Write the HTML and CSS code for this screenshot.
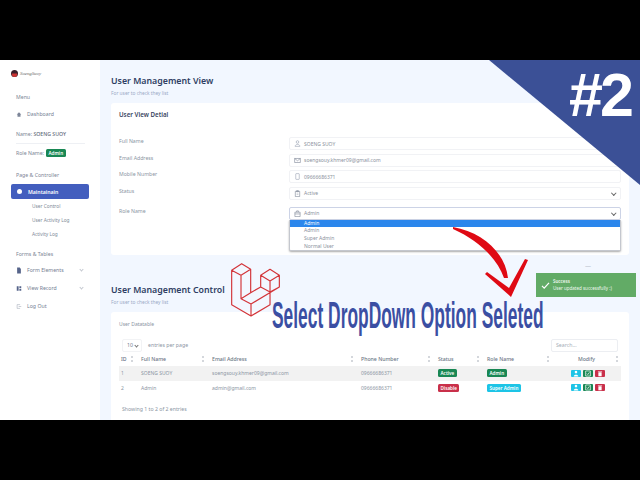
FILE: index.html
```html
<!DOCTYPE html>
<html>
<head>
<meta charset="utf-8" />
<title>User Management</title>
<link rel="stylesheet" href="styles.css">
</head>
<body>
<div class="frame">
  <div class="app">
    <div class="sidebar">
      <div class="brand">
        <svg class="brand-mark" viewBox="0 0 8 8"><circle cx="4" cy="4" r="4" fill="#3a1f2b"/><path d="M1 4h6v1.500a3 2.500 0 0 1-6 0z" fill="#c33"/></svg>
        <span class="brand-name">SoengSuoy</span>
      </div>
      <div class="side-title first">Menu</div>
      <div class="side-item">
        <svg class="side-icon" viewBox="0 0 8 8"><path d="M4 1 7 4H6v3H2V4H1z" fill="#7c8598"/></svg>Dashboard
      </div>
      <div class="side-title name">Name: <b>SOENG SUOY</b></div>
      <div class="side-line"></div>
      <div class="side-title role">Role Name: <span class="badge green">Admin</span></div>
      <div class="side-title page">Page &amp; Controller</div>
      <div class="side-pill"><span class="pill-dot"></span>Maintainain</div>
      <div class="side-sub">User Control</div>
      <div class="side-sub">User Activity Log</div>
      <div class="side-sub">Activity Log</div>
      <div class="side-title forms">Forms &amp; Tables</div>
      <div class="side-item">
        <svg class="side-icon" viewBox="0 0 8 8"><path d="M1.500 0H5L6.500 2V8H1.500z" fill="#56648a"/></svg>Form Elements<span class="side-more"></span>
      </div>
      <div class="side-item">
        <svg class="side-icon" viewBox="0 0 8 8"><path d="M1 1h2.500v6H1zM4.500 1H7v2.500H4.500zM4.500 4.500H7V7H4.500z" fill="#56648a"/></svg>View Record<span class="side-more"></span>
      </div>
      <div class="side-item">
        <svg class="side-icon" viewBox="0 0 8 8"><path d="M5 2V1.500H1.500v5H5V6M3.500 4H7" fill="none" stroke="#8a93a6" stroke-width=".6"/></svg>Log Out
      </div>
    </div>

    <div class="main">
      <h1 class="page-title">User Management View</h1>
      <p class="page-sub">For user to check they list</p>
      <div class="card detail">
        <h2 class="card-title">User View Detial</h2>
        <div class="form-row">
          <label>Full Name</label>
          <div class="field">
            <svg class="field-icon" viewBox="0 0 8 8"><circle cx="4" cy="2.300" r="1.500" fill="none" stroke="#8a93a6" stroke-width=".6"/><path d="M1.300 7.300c0-3 5.400-3 5.400 0z" fill="none" stroke="#8a93a6" stroke-width=".6"/></svg>SOENG SUOY
          </div>
        </div>
        <div class="form-row">
          <label>Email Address</label>
          <div class="field">
            <svg class="field-icon" viewBox="0 0 8 8"><path d="M.7 1.700h6.600v4.600H.7zM.7 1.700 4 4.300l3.300-2.600" fill="none" stroke="#6b7488" stroke-width=".6"/></svg>soengsouy.khmer09@gmail.com
          </div>
        </div>
        <div class="form-row">
          <label>Mobile Number</label>
          <div class="field">
            <svg class="field-icon" viewBox="0 0 8 8"><rect x="2" y=".7" width="4" height="6.600" rx=".6" fill="none" stroke="#8a93a6" stroke-width=".6"/></svg>09666686371
          </div>
        </div>
        <div class="form-row">
          <label>Status</label>
          <div class="field select">
            <svg class="field-icon" viewBox="0 0 8 8"><path d="M1.500 1.500h5v6h-5zM3 .7h2v1.300H3zM3 4.700h2" fill="none" stroke="#6b7488" stroke-width=".6"/></svg>Active
          </div>
        </div>
        <div class="form-row role-row">
          <label>Role Name</label>
          <div class="role-wrap">
            <div class="field select open">
              <svg class="field-icon" viewBox="0 0 8 8"><path d="M1 2.500h6v5H1zM3 2.500V1h2v1.500M1 4.500h6" fill="none" stroke="#6b7488" stroke-width=".6"/></svg>Admin
            </div>
            <div class="options">
              <div class="option active">Admin</div>
              <div class="option">Admin</div>
              <div class="option">Super Admin</div>
              <div class="option">Normal User</div>
            </div>
          </div>
        </div>
      </div>

      <h1 class="page-title second">User Management Control</h1>
      <p class="page-sub">For user to check they list</p>
      <div class="card list">
        <div class="list-title">User Datatable</div>
        <div class="tools">
          <span class="length">10</span>
          <span class="length-text">entries per page</span>
          <span class="search">Search...</span>
        </div>
        <table>
          <colgroup>
            <col class="c-id"><col class="c-name"><col class="c-mail"><col class="c-phone"><col class="c-status"><col class="c-role"><col class="c-mod">
          </colgroup>
          <thead>
            <tr>
              <th>ID</th><th>Full Name</th><th>Email Address</th><th>Phone Number</th><th>Status</th><th>Role Name</th><th class="mid">Modify</th>
            </tr>
          </thead>
          <tbody>
            <tr class="band">
              <td>1</td><td>SOENG SUOY</td><td>soengsouy.khmer09@gmail.com</td><td>09666686371</td>
              <td><span class="badge green">Active</span></td>
              <td><span class="badge green">Admin</span></td>
              <td class="mid">
                <span class="btn cyan"><svg viewBox="0 0 8 6"><circle cx="4" cy="1.800" r="1.100" fill="#fff"/><path d="M2 5.500c0-2 4-2 4 0z" fill="#fff"/></svg></span>
                <span class="btn green"><svg viewBox="0 0 8 6"><path d="M2 .8h4v4.400H2z" fill="none" stroke="#fff" stroke-width=".6"/><path d="M3 3 3.800 3.900 5.200 2" fill="none" stroke="#fff" stroke-width=".6"/></svg></span>
                <span class="btn red"><svg viewBox="0 0 8 6"><path d="M2.200 1h3.600v.6H2.200zM2.600 2h2.800v3.400H2.600z" fill="#fff"/></svg></span>
              </td>
            </tr>
            <tr>
              <td>2</td><td>Admin</td><td>admin@gmail.com</td><td>09666686371</td>
              <td><span class="badge red">Disable</span></td>
              <td><span class="badge cyan">Super Admin</span></td>
              <td class="mid">
                <span class="btn cyan"><svg viewBox="0 0 8 6"><circle cx="4" cy="1.800" r="1.100" fill="#fff"/><path d="M2 5.500c0-2 4-2 4 0z" fill="#fff"/></svg></span>
                <span class="btn green"><svg viewBox="0 0 8 6"><path d="M2 .8h4v4.400H2z" fill="none" stroke="#fff" stroke-width=".6"/><path d="M3 3 3.800 3.900 5.200 2" fill="none" stroke="#fff" stroke-width=".6"/></svg></span>
                <span class="btn red"><svg viewBox="0 0 8 6"><path d="M2.200 1h3.600v.6H2.200zM2.600 2h2.800v3.400H2.600z" fill="#fff"/></svg></span>
              </td>
            </tr>
          </tbody>
        </table>
        <div class="showing">Showing 1 to 2 of 2 entries</div>
      </div>
    </div>

    <!-- thumbnail stuff on top of the page -->
    <div class="corner"></div>
    <div class="corner-text">#2</div>
    <svg class="laravel" viewBox="375 20 155 170">
      <path d="M380 45 410 25 437 42 408 60ZM380 45V148L438 182 495 148V110M408 60V130L438 146V182M437 42V112L408 130M437 112 467 95M467 60 495 42 523 60 495 77ZM467 60V95L495 110 523 95V60M495 77V110M523 95 438 146" fill="none" stroke="#d3353a" stroke-width="3.500" stroke-linejoin="round"/>
    </svg>
    <div class="caption">Select DropDown Option Seleted</div>
    <svg class="arrow" viewBox="450 225 80 75">
      <path d="M453 227C482 232 505 252 508 278L504 278C497 258 478 240 453 229Z" fill="#df0a14"/>
      <path d="M511 297 485 274 487 272 509 288 525 259 528 260Z" fill="#df0a14"/>
    </svg>
    <div class="toast-tip">&#8212;</div>
    <div class="toast">
      <svg class="toast-icon" viewBox="0 0 10 8"><path d="M1 4.500 3.500 7 9 1" fill="none" stroke="#fff" stroke-width="1.400"/></svg>
      <div>
        <div class="toast-head">Success</div>
        <div>User updated successfully :)</div>
      </div>
    </div>
  </div>
</div>
</body>
</html>
```
FILE: styles.css
```css
*{ margin:0; padding:0; box-sizing:border-box;}
body{ background:#000; font-family:"Noto Sans","Open Sans",sans-serif; font-size:5.200px; color:#6f7b8c;}
.frame{ height:480px; padding:60px 0; overflow:hidden;}
.app{ display:flex; height:360px; position:relative; overflow:hidden;}

/* sidebar */
.sidebar{ width:100px; background:#fff; padding:0 11px; flex:none;}
.brand{ display:flex; align-items:center; gap:2px; height:8px; margin:9px 0 0 0;}
.brand-mark{ width:7px; height:7px;}
.brand-name{ font-family:"Liberation Serif",serif; font-style:italic; font-size:4.800px; color:#666;}
.side-title{ padding-left:5px; color:#7b8594; line-height:8px;}
.side-title.first{ margin-top:16px;}
.side-title.name{ margin-top:7px;}
.side-title.name b{ font-weight:500; color:#5d6878;}
.side-line{ height:1px; background:#eef0f4; margin:5px 4px 0 5px;}
.side-title.role{ margin-top:5px; display:flex; align-items:center; gap:2px;}
.side-title.page{ margin-top:14px;}
.side-title.forms{ margin-top:9px; margin-bottom:3px;}
.side-item{ display:flex; align-items:center; height:18px; padding-left:5px; color:#747e92; position:relative;}
.side-title.first + .side-item{ margin-top:4px;}
.side-icon{ width:6px; height:7px; margin-right:5px;}
.side-more{ position:absolute; left:69px; top:7px; width:3px; height:3px; border-right:1px solid #c4c8d0; border-bottom:1px solid #c4c8d0; transform:rotate(45deg);}
.side-pill{ display:flex; align-items:center; height:15px; margin-top:5px; padding-left:6px; background:#435ebe; border-radius:2px; color:#fff; font-weight:600;}
.pill-dot{ width:5px; height:5px; border-radius:50%; background:#fff; margin-right:6px;}
.side-sub{ height:14px; line-height:14px; padding-left:21px; color:#808a98; font-size:4.800px;}

/* main */
.main{ flex:1; background:#f2f7ff; padding:15px 11px 0 11px; min-width:0;}
.page-title{ font-size:8.800px; line-height:12px; font-weight:600; color:#2f3e63;}
.page-title.second{ margin-top:29px;}
.page-sub{ font-size:4.800px; line-height:7px; margin-top:3px; color:#9aa9c6;}
.card{ background:#fff; border-radius:3px; margin-top:6px;}
.detail{ height:152px; padding:7px 8px;}
.card-title{ font-size:6.200px; line-height:9px; font-weight:600; color:#38445f; margin-bottom:18px;}
.form-row{ display:flex; margin-bottom:3.500px; height:13px;}
.form-row label{ width:170px; flex:none; font-size:5.200px; line-height:8px; color:#8b95a3;}
.form-row.role-row{ margin-top:7px;}
.field{ flex:1; height:13px; border:1px solid #f1f2f5; border-radius:2px; display:flex; align-items:center; padding-left:4px; color:#8a919c; position:relative; font-size:5px;}
.field-icon{ width:7px; height:7px; margin-right:3px;}
.select::after{ content:""; position:absolute; right:5px; top:3px; width:2.500px; height:2.500px; border-right:1px solid #666; border-bottom:1px solid #666; transform:rotate(45deg);}
.role-wrap{ flex:1; position:relative;}
.field.open{ border-color:#ccd3e6;}
.options{ position:absolute; left:0; right:0; top:13px; background:#fff; border:1px solid #c4c7ce; border-top:0; border-radius:0 0 2px 2px; box-shadow:0 1px 2px #aaa;}
.option{ height:7.700px; line-height:7.700px; padding-left:14px; color:#8a919c; font-size:5px;}
.option.active{ background:#2b86ec; color:#fff;}

/* table card */
.list{ height:110px; padding:8px 8px;}
.list-title{ line-height:8px; color:#8b95a3; font-size:5px;}
.tools{ display:flex; align-items:center; height:14px; margin-top:10px; padding:0 3px;}
.length{ width:20px; height:13px; line-height:11px; padding-left:4px; border:1px solid #f2f3f5; border-radius:2px; margin-right:6px; position:relative;}
.length::after{ content:""; position:absolute; right:3px; top:4px; width:2px; height:2px; border-right:.7px solid #777; border-bottom:.7px solid #777; transform:rotate(45deg);}
.length-text{ color:#8b95a3;}
.search{ margin-left:auto; width:67px; height:13px; line-height:11px; padding-left:4px; border:1px solid #eceef2; border-radius:2px; color:#a6adb7;}
table{ width:502px; border-collapse:collapse; table-layout:fixed;}
.c-id{ width:17px;}
.c-name{ width:71px;}
.c-mail{ width:149px;}
.c-phone{ width:77px;}
.c-status{ width:49px;}
.c-role{ width:70px;}
.c-mod{ width:69px;}
th{ height:14px; text-align:left; font-weight:500; padding-left:5px; color:#6b7686; font-size:5.200px; white-space:nowrap; position:relative;}
/* sort arrows */
th::after{ content:""; position:absolute; right:3px; top:4px; width:2px; height:6px; background:linear-gradient(#d4d7dc 2px,transparent 2px,transparent 4px,#d4d7dc 4px);}
td{ height:14.500px; padding-left:5px; color:#8b95a3; font-size:5px; white-space:nowrap;}
th:first-child, td:first-child{ padding-left:2px;}
.band td{ background:#f2f2f2;}
th.mid{ text-align:center; padding:0;}
td.mid{ padding:0 16px 0 0; text-align:right; font-size:0;}
.badge{ display:inline-block; height:8px; line-height:8px; padding:0 2.500px; border-radius:1.500px; color:#fff; font-size:4.600px; font-weight:600; vertical-align:middle;}
.green{ background:#198754;}
.red{ background:#c9304a;}
.cyan{ background:#1dc4e6;}
.btn{ display:inline-block; width:10px; height:7px; border-radius:1px; margin-left:2px; vertical-align:middle;}
.btn svg{ display:block; width:10px; height:7px;}
.showing{ margin-top:10px; padding-left:3px; color:#8b95a3; line-height:8px;}

/* thumbnail overlay */
.corner{ position:absolute; right:0; top:0; width:151px; height:125px; background:#3b5096; clip-path:polygon(0 0,100% 0,100% 100%);}
.corner-text{ position:absolute; left:569px; top:0; font:bold 61px/70px "Liberation Sans",sans-serif; letter-spacing:-3px; color:#fff;}
.laravel{ position:absolute; left:230px; top:201.700px; width:51.700px; height:56.700px;}
.caption{ position:absolute; left:272px; top:234px; font:bold 37px/44px "Liberation Sans",sans-serif; color:#3b4fa3; white-space:nowrap; transform:scaleX(.47); transform-origin:left center;}
.arrow{ position:absolute; left:450px; top:165px; width:80px; height:75px;}
.toast-tip{ position:absolute; left:585px; top:202px; color:#aab2bd; font-size:6px; line-height:8px;}
.toast{ position:absolute; left:536px; top:213px; width:100px; height:24px; background:#62ab66; color:#eef7ef; display:flex; align-items:center; gap:3px; padding-left:5px; font-size:4.500px; line-height:7px;}
.toast-icon{ width:9px; height:7px; flex:none;}
.toast-head{ font-weight:600;}
```
